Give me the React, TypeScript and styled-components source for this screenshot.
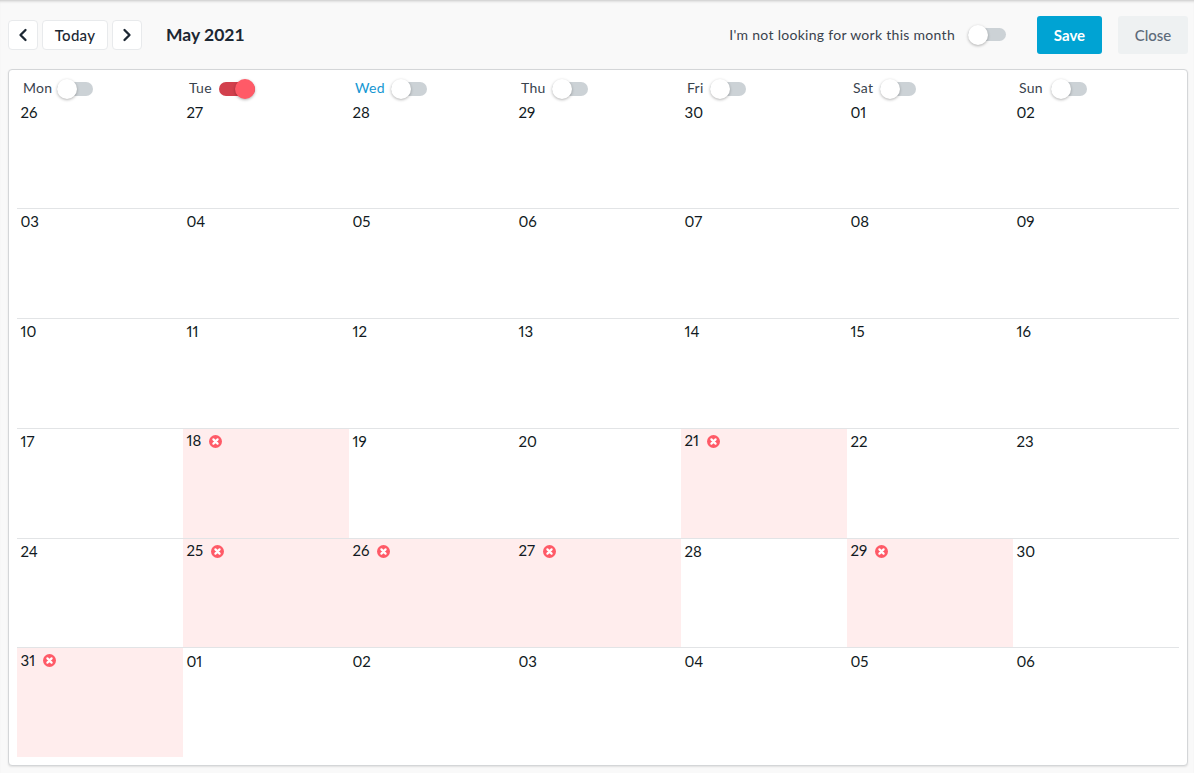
import styled, { createGlobalStyle } from "styled-components";
import { ChevronLeft, ChevronRight } from "lucide-react";

const GlobalStyle = createGlobalStyle`
  html, body {
    margin: 0;
    padding: 0;
    background: #f9f9f9;
    font-family: "Lato", "Liberation Sans", sans-serif;
    color: #1c2733;
  }
`;

type DayCell = { label: string; off?: boolean };

const weekdays = [
  { name: "Mon", width: 34 },
  { name: "Tue", width: 30, on: true },
  { name: "Wed", width: 36, today: true },
  { name: "Thu", width: 31 },
  { name: "Fri", width: 23 },
  { name: "Sat", width: 27 },
  { name: "Sun", width: 32 },
];

const weeks: DayCell[][] = [
  ["26", "27", "28", "29", "30", "01", "02"].map((label) => ({ label })),
  ["03", "04", "05", "06", "07", "08", "09"].map((label) => ({ label })),
  ["10", "11", "12", "13", "14", "15", "16"].map((label) => ({ label })),
  [
    { label: "17" },
    { label: "18", off: true },
    { label: "19" },
    { label: "20" },
    { label: "21", off: true },
    { label: "22" },
    { label: "23" },
  ],
  [
    { label: "24" },
    { label: "25", off: true },
    { label: "26", off: true },
    { label: "27", off: true },
    { label: "28" },
    { label: "29", off: true },
    { label: "30" },
  ],
  [
    { label: "31", off: true },
    { label: "01" },
    { label: "02" },
    { label: "03" },
    { label: "04" },
    { label: "05" },
    { label: "06" },
  ],
];

function RemoveIcon() {
  return (
    <svg width="13" height="13" viewBox="0 0 13 13" aria-hidden="true">
      <circle cx="6.5" cy="6.5" r="6.5" fill="#ff5a67" />
      <path d="M4.4 4.4l4.2 4.2M8.6 4.4l-4.2 4.2" stroke="#fff" strokeWidth="2.2" strokeLinecap="round" />
    </svg>
  );
}

export default function App() {
  return (
    <Page>
      <GlobalStyle />
      <Toolbar>
        <NavGroup>
          <NavButton aria-label="Previous month">
            <ChevronLeft size={20} strokeWidth={2.8} />
          </NavButton>
          <TodayButton>Today</TodayButton>
          <NavButton aria-label="Next month">
            <ChevronRight size={20} strokeWidth={2.8} />
          </NavButton>
          <MonthTitle>May 2021</MonthTitle>
        </NavGroup>
        <Actions>
          <NotLooking>I'm not looking for work this month</NotLooking>
          <Toggle $small />
          <SaveButton>Save</SaveButton>
          <CloseButton>Close</CloseButton>
        </Actions>
      </Toolbar>
      <Card>
        <WeekdayRow>
          {weekdays.map((day) => (
            <Weekday key={day.name}>
              <WeekdayName $today={day.today} $width={day.width}>
                {day.name}
              </WeekdayName>
              <Toggle $on={day.on} />
            </Weekday>
          ))}
        </WeekdayRow>
        {weeks.map((week, i) => (
          <Week key={i} $first={i === 0} $short={i === 4}>
            {week.map((cell, j) => (
              <Day key={j} $off={cell.off}>
                <DayNumber $off={cell.off}>{cell.label}</DayNumber>
                {cell.off && <RemoveIcon />}
              </Day>
            ))}
          </Week>
        ))}
      </Card>
    </Page>
  );
}

const Page = styled.div`
  width: 1194px;
  height: 773px;
  box-sizing: border-box;
  padding: 0 6px 7px 8px;
  overflow: hidden;
  box-shadow: inset 0 3px 3px -2px #c4c4c4;
`;

const Toolbar = styled.div`
  height: 69px;
  display: flex;
  align-items: center;
  justify-content: space-between;
`;

const NavGroup = styled.div`
  display: flex;
  align-items: center;
  gap: 4px;
`;

const NavButton = styled.button`
  width: 30px;
  height: 30px;
  padding: 0;
  display: flex;
  align-items: center;
  justify-content: center;
  background: #fff;
  border: 1px solid #e8eaec;
  border-radius: 4px;
  color: #1c2733;
`;

const TodayButton = styled.button`
  width: 66px;
  height: 30px;
  padding: 0;
  background: #fff;
  border: 1px solid #e8eaec;
  border-radius: 4px;
  font: 500 15px "Lato", sans-serif;
  letter-spacing: 0.3px;
  color: #1c2733;
`;

const MonthTitle = styled.h1`
  margin: 0 0 0 20px;
  font-size: 17.5px;
  font-weight: 700;
  color: #1c2733;
`;

const Actions = styled.div`
  display: flex;
  align-items: center;
`;

const NotLooking = styled.span`
  font-size: 14px;
  letter-spacing: 0.29px;
  color: #39434e;
  margin-right: 13px;
`;

const Toggle = styled.span<{ $on?: boolean; $small?: boolean }>`
  position: relative;
  display: inline-block;
  flex: none;
  width: ${(p) => (p.$small ? "38px" : "36px")};
  height: ${(p) => (p.$small ? "13px" : "14px")};
  border-radius: 7px;
  background: ${(p) => (p.$on ? "#d2404d" : "#ccd2d6")};
  margin-right: ${(p) => (p.$small ? "31px" : "0")};

  &::after {
    content: "";
    position: absolute;
    top: ${(p) => (p.$small ? "-3.5px" : "-3px")};
    left: ${(p) => (p.$on ? "16px" : "0")};
    width: 20px;
    height: 20px;
    border-radius: 50%;
    background: ${(p) => (p.$on ? "#ff5a67" : "#fff")};
    box-shadow: 0 1px 3px rgba(0, 0, 0, 0.3);
  }
`;

const SaveButton = styled.button`
  width: 65px;
  height: 38px;
  padding: 0;
  border: none;
  border-radius: 3px;
  background: #00a3d3;
  color: #fff;
  font: 700 15px "Lato", sans-serif;
  margin-right: 16px;
`;

const CloseButton = styled.button`
  width: 70px;
  height: 38px;
  padding: 0;
  border: none;
  border-radius: 3px;
  background: #eef1f2;
  color: #5d6b7a;
  font: 500 15px "Lato", sans-serif;
`;

const Card = styled.div`
  width: 1180px;
  height: 697px;
  box-sizing: border-box;
  padding: 8px 8px 0;
  background: #fff;
  border-radius: 4px;
  border: 1px solid #d4d6d8;
  box-shadow: 0 1px 2px rgba(0, 0, 0, 0.1);
`;

const WeekdayRow = styled.div`
  display: grid;
  grid-template-columns: repeat(7, 166px);
  height: 22px;
`;

const Weekday = styled.div`
  display: flex;
  align-items: center;
  padding: 0 0 1px 6px;
`;

const WeekdayName = styled.span<{ $today?: boolean; $width: number }>`
  width: ${(p) => p.$width}px;
  margin-top: -2px;
  font-size: 14px;
  letter-spacing: 0.3px;
  color: ${(p) => (p.$today ? "#1496d2" : "#39434e")};
`;

const Week = styled.div<{ $first?: boolean; $short?: boolean }>`
  display: grid;
  grid-template-columns: repeat(7, 166px);
  height: ${(p) => (p.$first ? "108px" : p.$short ? "109px" : "110px")};
  box-sizing: border-box;
  border-top: ${(p) => (p.$first ? "none" : "1px solid #e2e4e6")};

  &:last-child > div {
    padding-top: 4px;
  }
  &:last-child svg {
    margin-top: 2px;
  }
`;

const Day = styled.div<{ $off?: boolean }>`
  display: flex;
  align-items: flex-start;
  gap: 8px;
  padding: 3px 0 0 3.5px;
  background: ${(p) => (p.$off ? "#ffeded" : "#fff")};

  svg {
    margin-top: 3px;
  }
`;

const DayNumber = styled.span<{ $off?: boolean }>`
  margin-top: ${(p) => (p.$off ? "-1px" : "0")};
  font-size: 15px;
  line-height: 18px;
  font-variant-numeric: proportional-nums;
  color: #111a22;
`;
